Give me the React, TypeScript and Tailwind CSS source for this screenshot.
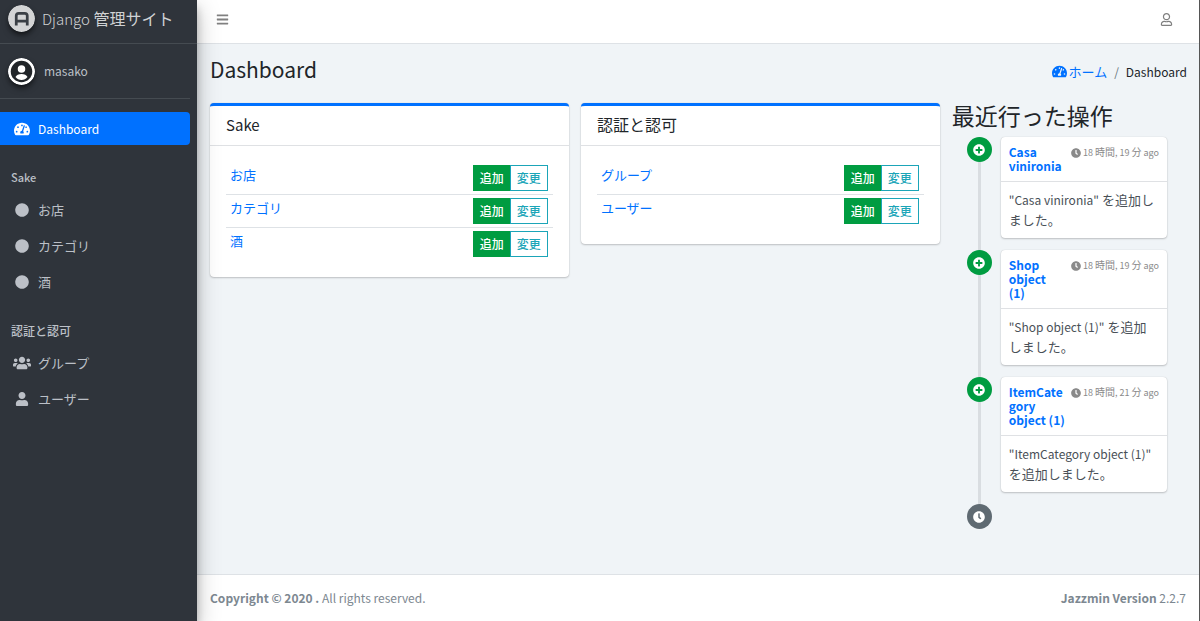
import { Fragment } from "react";
import type { ReactNode } from "react";
import { FaBars, FaCircle, FaClock, FaPlusCircle, FaRegUser, FaTachometerAlt, FaUser, FaUsers } from "react-icons/fa";

type MenuItem = {
    name: string;
    icon: ReactNode;
}

type MenuGroup = {
    name: string;
    latin?: boolean;
    items: MenuItem[];
}

type AppCard = {
    name: string;
    latin?: boolean;
    models: string[];
}

type Action = {
    id: number;
    object: string;
    time: [string, string];
}

const listMenu: MenuGroup[] = [
    {
        name: "Sake",
        latin: true,
        items: [
            { name: "お店", icon: <FaCircle className="size-3.5" /> },
            { name: "カテゴリ", icon: <FaCircle className="size-3.5" /> },
            { name: "酒", icon: <FaCircle className="size-3.5" /> },
        ],
    },
    {
        name: "認証と認可",
        items: [
            { name: "グループ", icon: <FaUsers className="size-[18px]" /> },
            { name: "ユーザー", icon: <FaUser className="size-3.5" /> },
        ],
    },
]

const listApp: AppCard[] = [
    { name: "Sake", latin: true, models: ["お店", "カテゴリ", "酒"] },
    { name: "認証と認可", models: ["グループ", "ユーザー"] },
]

const listAction: Action[] = [
    { id: 1, object: "Casa vinironia", time: ["18", "19"] },
    { id: 2, object: "Shop object (1)", time: ["18", "19"] },
    { id: 3, object: "ItemCategory object (1)", time: ["18", "21"] },
]

const Logo = () => (
    <svg viewBox="0 0 54 54" className="size-[27px] rounded-full shadow-md shadow-black/50" aria-hidden="true">
        <circle cx="27" cy="27" r="27" fill="#d3d4d5" />
        <path d="M16.5 41V21.5q0-5 5-5h12q5 0 5 5V41M16.5 32h22" fill="none" stroke="#3a3f45" strokeWidth="5.5" />
    </svg>
)

const Avatar = () => (
    <svg viewBox="0 0 54 54" className="size-[27px] rounded-full shadow-md shadow-black/50" aria-hidden="true">
        <circle cx="27" cy="27" r="27" fill="#fff" />
        <circle cx="27" cy="27" r="21.5" fill="#212529" />
        <circle cx="27" cy="22" r="7.5" fill="#fff" />
        <path d="M15 38c2-4 6-6 12-6s10 2 12 6c-3 4-7 6-12 6s-9-2-12-6z" fill="#fff" />
    </svg>
)

const Sidebar = () => (
    <aside className="z-10 w-[197px] shrink-0 bg-[#2f343b] text-[#bcc0c7] shadow-[0_8px_22px_rgba(0,0,0,0.25),0_8px_8px_rgba(0,0,0,0.22)]">
        <a href="#" className="flex h-11 items-center gap-[7px] border-b border-[#454b51] pb-1.5 pl-2 text-[#d0d2d4]">
            <Logo />
            <span className="text-base leading-5"><span className="text-[15px] font-light">Django</span> 管理サイト</span>
        </a>
        <div className="mr-[7px] flex h-[55px] items-center gap-[9px] border-b border-[#454b51] pl-2">
            <Avatar />
            <a href="#" className="pb-px text-[12px]">masako</a>
        </div>
        <nav className="mr-[7px] mt-[13px]">
            <a href="#" className="mb-[18px] flex h-[33px] items-center rounded-r bg-[#0071ff] pl-[13px] text-[12px] text-white">
                <span className="mr-[7px] flex w-[18px] justify-center"><FaTachometerAlt className="size-4" /></span>
                Dashboard
            </a>
            {
                listMenu.map((group, index) => (
                    <Fragment key={index}>
                        <div className={`mt-4 flex h-[29px] items-center pl-[11px] font-medium ${group.latin ? "text-[11px]" : "text-[12px]"}`}>{group.name}</div>
                        {
                            group.items.map((item) => (
                                <a href="#" key={item.name} className="flex h-9 items-center pl-[13px] text-[13px]">
                                    <span className="mr-[7px] flex w-[18px] justify-center">{item.icon}</span>
                                    {item.name}
                                </a>
                            ))
                        }
                    </Fragment>
                ))
            }
        </nav>
    </aside>
)

const ModelCard = ({ app }: { app: AppCard }) => (
    <div className="rounded border-t-3 border-[#0071ff] bg-white shadow-[0_0_1px_rgba(0,0,0,0.2),0_1px_2px_rgba(0,0,0,0.2)]">
        <h2 className={`flex h-10 items-center border-b border-[#dfe1e4] px-4 ${app.latin ? "text-[15px]" : "pb-1 text-[16px]"}`}>{app.name}</h2>
        <div className="p-4">
            <table className="w-full border-separate border-spacing-0">
                <tbody>
                    {
                        app.models.map((model) => (
                            <tr key={model} className="group h-[33px]">
                                <td className="border-b border-[#dee2e6] px-1 pt-[3px] align-top text-[13px] leading-[19px] text-[#0071ff] group-last:border-transparent"><a href="#">{model}</a></td>
                                <td className="border-b border-[#dee2e6] pr-[5px] group-last:border-transparent">
                                    <div className="flex justify-end text-[12px] font-medium leading-6">
                                        <a href="#" className="border border-[#009c41] bg-[#009c41] px-1.5 text-white">追加</a>
                                        <a href="#" className="-ml-px border border-[#1ba5b8] bg-white px-1.5 text-[#1ba5b8]">変更</a>
                                    </div>
                                </td>
                            </tr>
                        ))
                    }
                </tbody>
            </table>
        </div>
    </div>
)

const Timeline = () => (
    <div className="relative">
        <div className="absolute bottom-3 left-[26px] top-0 w-[3px] bg-[#d9dde1]"></div>
        {
            listAction.map((action) => (
                <div key={action.id} className="relative mb-3 flex items-start">
                    <span className="ml-[15px] mr-[9px] flex size-[25px] shrink-0 items-center justify-center rounded-full bg-[#009c41] text-white"><FaPlusCircle className="size-3" /></span>
                    <div className="mr-5 min-w-0 flex-1 rounded bg-white shadow-[0_0_1px_rgba(0,0,0,0.2),0_1px_2px_rgba(0,0,0,0.2)]">
                        <div className="border-b border-[#dfe1e4] p-2">
                            {/* the time floats over two lines, a third line of the title runs below it */}
                            <span className="float-right flex h-7 w-[95px] items-start justify-end gap-0.5 whitespace-nowrap text-[9px] leading-[14px] text-[#8a8a8a]">
                                <FaClock className="mt-[3px] size-[10px]" />
                                <span>{action.time[0]} <span className="text-[10px]">時間</span>, {action.time[1]} <span className="text-[10px]">分</span> ago</span>
                            </span>
                            <h3 className="wrap-anywhere text-[12px] font-bold leading-[14px] text-[#0071ff]"><a href="#">{action.object}</a></h3>
                        </div>
                        <p className="p-2 text-[13px] leading-5 text-[#495057]"><span className="text-[12px]">"{action.object}"</span> を追加しました。</p>
                    </div>
                </div>
            ))
        }
        <span className="relative ml-[15px] flex size-[25px] items-center justify-center rounded-full bg-[#5f6a72] text-white"><FaClock className="size-3" /></span>
    </div>
)

const App = () => {
    return (
        <div className="flex min-h-screen bg-[#f0f4f7] font-['Noto_Sans_CJK_JP',sans-serif] text-[#212529]">
            <Sidebar />
            <div className="flex min-w-0 flex-1 flex-col border-r border-[#555]">
                {/* TOP */}
                <header className="flex h-11 items-center justify-between border-b border-[#dee2e6] bg-white pb-1 pl-[19px] pr-[26px] text-[#808080]">
                    <button aria-label="Menu"><FaBars className="size-[13px]" /></button>
                    <button aria-label="Account"><FaRegUser className="size-[13px]" /></button>
                </header>
                {/* CENTER */}
                <main className="flex-1 pl-[13px] pr-3">
                    <div className="flex h-[59px] items-center justify-between">
                        <h1 className="pb-2 text-[21px]">Dashboard</h1>
                        <nav className="flex items-center pb-1 text-[12px]">
                            <a href="#" className="flex items-center gap-0.5 text-[13px] text-[#0071ff]"><FaTachometerAlt className="size-[15px]" />ホーム</a>
                            <span className="px-[7px] text-[#6c757d]">/</span>
                            <span>Dashboard</span>
                        </nav>
                    </div>
                    <div className="-mx-1.5 flex">
                        <div className="flex w-3/4 items-start">
                            {
                                listApp.map((app) => (
                                    <div key={app.name} className="w-1/2 px-1.5"><ModelCard app={app} /></div>
                                ))
                            }
                        </div>
                        <div className="w-1/4 px-1.5">
                            <h2 className="mb-2.5 text-[23px] leading-6">最近行った操作</h2>
                            <Timeline />
                        </div>
                    </div>
                </main>
                {/* BOTTOM */}
                <footer className="flex h-[47px] items-center justify-between border-t border-[#dee2e6] bg-white px-[13px] text-[12px] text-[#7d8891]">
                    <div><strong>Copyright © 2020 .</strong> All rights reserved.</div>
                    <div><b>Jazzmin Version</b> 2.2.7</div>
                </footer>
            </div>
        </div>
    );
}


export default App;
